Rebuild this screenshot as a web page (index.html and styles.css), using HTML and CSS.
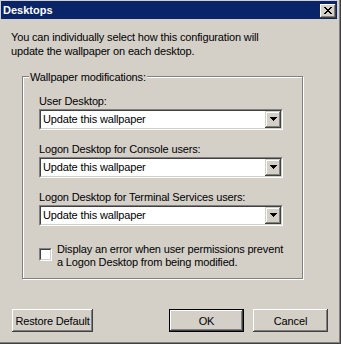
FILE: index.html
```html
<!DOCTYPE html>
<html>
<head>
<meta charset="utf-8">
<title>Desktops</title>
<link rel="stylesheet" href="styles.css">
</head>
<body>
<div class="window">
  <div class="titlebar">
    <span class="title">Desktops</span>
    <span class="close">
      <svg width="8" height="7" viewBox="0 0 8 7" shape-rendering="crispEdges"><path d="M0 0h2v1h-2zM6 0h2v1h-2zM1 1h2v1h-2zM5 1h2v1h-2zM2 2h4v1h-4zM3 3h2v1h-2zM2 4h4v1h-4zM1 5h2v1h-2zM5 5h2v1h-2zM0 6h2v1h-2zM6 6h2v1h-2z" fill="#000"/></svg>
    </span>
  </div>
  <div class="content">
    <p class="intro">You can individually select how this configuration will<br>update the wallpaper on each desktop.</p>
    <div class="group">
      <span class="group-title">Wallpaper modifications:</span>
      <div class="field first">
        <div class="label">User Desktop:</div>
        <div class="combo"><div class="combo-inner"><span class="combo-text">Update this wallpaper</span><span class="drop"><svg width="7" height="4" viewBox="0 0 7 4" shape-rendering="crispEdges"><path d="M0 0h7v1h-1v1h-1v1h-1v1h-1v-1h-1v-1h-1v-1h-1z" fill="#000"/></svg></span></div></div>
      </div>
      <div class="field">
        <div class="label">Logon Desktop for Console users:</div>
        <div class="combo"><div class="combo-inner"><span class="combo-text">Update this wallpaper</span><span class="drop"><svg width="7" height="4" viewBox="0 0 7 4" shape-rendering="crispEdges"><path d="M0 0h7v1h-1v1h-1v1h-1v1h-1v-1h-1v-1h-1v-1h-1z" fill="#000"/></svg></span></div></div>
      </div>
      <div class="field">
        <div class="label">Logon Desktop for Terminal Services users:</div>
        <div class="combo"><div class="combo-inner"><span class="combo-text">Update this wallpaper</span><span class="drop"><svg width="7" height="4" viewBox="0 0 7 4" shape-rendering="crispEdges"><path d="M0 0h7v1h-1v1h-1v1h-1v1h-1v-1h-1v-1h-1v-1h-1z" fill="#000"/></svg></span></div></div>
      </div>
      <div class="check-row">
        <span class="checkbox"><span class="checkbox-inner"></span></span>
        <span class="check-text">Display an error when user permissions prevent<br>a Logon Desktop from being modified.</span>
      </div>
    </div>
    <div class="buttons">
      <button class="btn btn-wide">Restore Default</button>
      <span class="spacer"></span>
      <button class="btn btn-default">OK</button>
      <button class="btn">Cancel</button>
    </div>
  </div>
</div>
</body>
</html>
```
FILE: styles.css
```css
html, body {
  margin: 0;
  padding: 0;
  background: #D4D0C8;
}

.window {
  width: 341px;
  height: 344px;
  box-sizing: border-box;
  padding: 1px 4px 4px 1px;
  display: flex;
  flex-direction: column;
  background: #D4D0C8;
  box-shadow: inset -1px -1px 0 #404040, inset -2px -2px 0 #808080;
  font-family: "Liberation Sans", Arial, sans-serif;
  font-size: 11px;
  letter-spacing: -0.15px;
  color: #000;
}

.titlebar {
  height: 18px;
  flex: none;
  background: #0A246A;
  display: flex;
  align-items: flex-start;
  justify-content: space-between;
  padding: 0 1px 0 2px;
  color: #fff;
}

.title {
  font-weight: bold;
  font-size: 11px;
  letter-spacing: 0;
  line-height: 18px;
}

.close {
  margin-top: 3px;
  width: 16px;
  height: 14px;
  box-sizing: border-box;
  background: #D4D0C8;
  display: flex;
  align-items: center;
  justify-content: center;
  box-shadow: inset -1px -1px 0 #404040, inset 1px 1px 0 #fff, inset -2px -2px 0 #808080;
}

.close svg {
  display: block;
  margin-left: -1px;
  margin-top: -1px;
}

.content {
  flex: 1;
  display: flex;
  flex-direction: column;
}

.intro {
  margin: 11px 0 0 10px;
  line-height: 14px;
  white-space: nowrap;
}

.group {
  margin: 18px 0 0 21px;
  width: 281px;
  box-sizing: border-box;
  border: 1px solid #808080;
  box-shadow: inset 1px 1px 0 #fff, 1px 1px 0 #fff;
  padding: 0 19px 9px 16px;
  display: flex;
  flex-direction: column;
}

.group-title {
  align-self: flex-start;
  margin: -6px 0 0 -10px;
  padding: 0 1px;
  background: #D4D0C8;
  line-height: 13px;
  white-space: nowrap;
}

.field {
  margin-top: 13px;
}

.field.first {
  margin-top: 11px;
}

.label {
  line-height: 13px;
  white-space: nowrap;
}

.combo {
  margin-top: 1px;
  height: 21px;
  box-sizing: border-box;
  border: 1px solid;
  border-color: #808080 #fff #fff #808080;
}

.combo-inner {
  height: 19px;
  box-sizing: border-box;
  border: 1px solid;
  border-color: #404040 #D4D0C8 #D4D0C8 #404040;
  background: #fff;
  display: flex;
}

.combo-text {
  flex: 1;
  line-height: 17px;
  padding-left: 2px;
  white-space: nowrap;
}

.drop {
  width: 16px;
  height: 17px;
  box-sizing: border-box;
  background: #D4D0C8;
  display: flex;
  align-items: center;
  justify-content: center;
  box-shadow: inset -1px -1px 0 #404040, inset 1px 1px 0 #D4D0C8, inset -2px -2px 0 #808080, inset 2px 2px 0 #fff;
}

.drop svg {
  display: block;
  margin-top: -1px;
}

.check-row {
  margin-top: 17px;
  display: flex;
  align-items: flex-start;
}

.checkbox {
  flex: none;
  margin-top: 5px;
  width: 13px;
  height: 13px;
  box-sizing: border-box;
  border: 1px solid;
  border-color: #808080 #fff #fff #808080;
}

.checkbox-inner {
  display: block;
  height: 11px;
  box-sizing: border-box;
  border: 1px solid;
  border-color: #404040 #D4D0C8 #D4D0C8 #404040;
  background: #fff;
}

.check-text {
  margin-left: 5px;
  line-height: 13px;
  white-space: nowrap;
}

.buttons {
  margin-top: 30px;
  display: flex;
  padding: 0 9px 0 11px;
}

.spacer {
  flex: 1;
}

.btn {
  width: 75px;
  height: 23px;
  box-sizing: border-box;
  padding: 0;
  margin: 0;
  border: none;
  background: #D4D0C8;
  font-family: "Liberation Sans", Arial, sans-serif;
  font-size: 11px;
  letter-spacing: -0.15px;
  color: #000;
  box-shadow: inset -1px -1px 0 #404040, inset 1px 1px 0 #fff, inset -2px -2px 0 #808080;
  white-space: nowrap;
}

.btn-wide {
  width: 81px;
}

.btn-default {
  border: 1px solid #000;
  margin-right: 9px;
}
```
